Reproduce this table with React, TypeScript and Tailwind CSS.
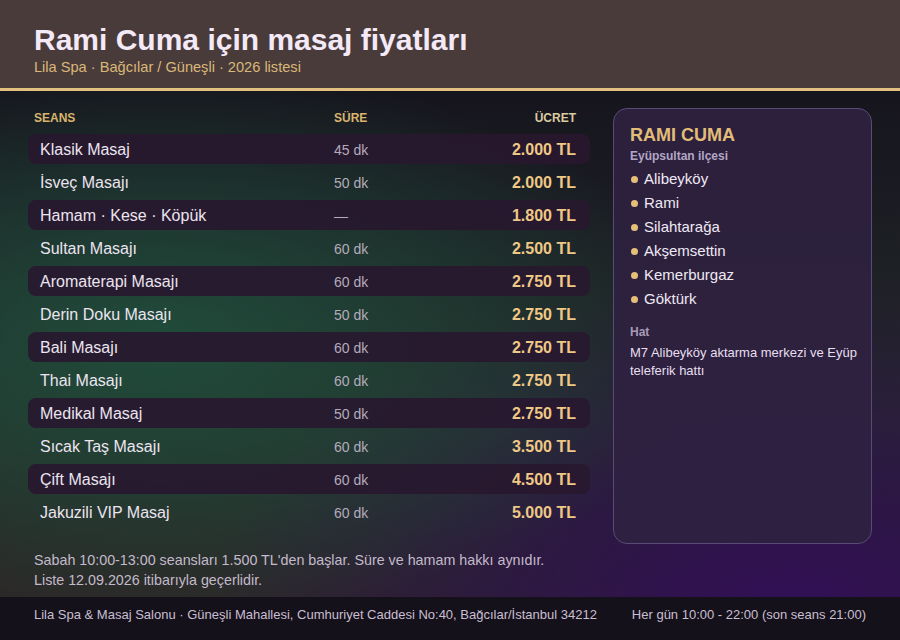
import React from "react";

const rows = [
  { name: "Klasik Masaj", time: "45 dk", price: "2.000 TL" },
  { name: "İsveç Masajı", time: "50 dk", price: "2.000 TL" },
  { name: "Hamam · Kese · Köpük", time: "—", price: "1.800 TL" },
  { name: "Sultan Masajı", time: "60 dk", price: "2.500 TL" },
  { name: "Aromaterapi Masajı", time: "60 dk", price: "2.750 TL" },
  { name: "Derin Doku Masajı", time: "50 dk", price: "2.750 TL" },
  { name: "Bali Masajı", time: "60 dk", price: "2.750 TL" },
  { name: "Thai Masajı", time: "60 dk", price: "2.750 TL" },
  { name: "Medikal Masaj", time: "50 dk", price: "2.750 TL" },
  { name: "Sıcak Taş Masajı", time: "60 dk", price: "3.500 TL" },
  { name: "Çift Masajı", time: "60 dk", price: "4.500 TL" },
  { name: "Jakuzili VIP Masaj", time: "60 dk", price: "5.000 TL" },
];

const areas = ["Alibeyköy", "Rami", "Silahtarağa", "Akşemsettin", "Kemerburgaz", "Göktürk"];

export default function App() {
  return (
    <div className="w-[900px] h-[640px] flex flex-col font-['Liberation_Sans',Arial,sans-serif] bg-[#181520] overflow-hidden">
      <header className="h-[91px] shrink-0 bg-[#4a3b3b] border-b-[3px] border-[#e2c07f] px-[34px] pt-[23px]">
        <h1 className="text-[30px] leading-[34px] font-bold text-[#f3e9f7]">Rami Cuma için masaj fiyatları</h1>
        <p className="text-[14.6px] leading-[20px] text-[#d9b878]">Lila Spa · Bağcılar / Güneşli · 2026 listesi</p>
      </header>

      <main className="flex-1 flex flex-col bg-[radial-gradient(ellipse_60%_55%_at_18%_50%,rgba(32,78,60,0.95)_0%,rgba(32,78,60,0.5)_50%,transparent_100%),radial-gradient(ellipse_65%_70%_at_88%_105%,rgba(50,14,88,1)_0%,rgba(46,16,80,0.65)_45%,transparent_100%),linear-gradient(to_bottom,#16151d_0%,#1b1d23_25%,#252a28_65%,#2c2727_100%)] pt-[17px]">
        <div className="flex pl-[28px] pr-[28px] gap-[23px]">
          <div className="w-[562px] flex flex-col">
            <div className="flex items-center h-[20px] px-[6px] mb-[6px] text-[12px] font-bold">
              <span className="w-[300px] text-[#d9b46e]">SEANS</span>
              <span className="flex-1 text-[#d9b46e]">SÜRE</span>
              <span className="pr-[8px] text-[#dccaa0]">ÜCRET</span>
            </div>
            <div className="flex flex-col gap-[3px]">
              {rows.map((r, i) => (
                <div
                  key={r.name}
                  className={
                    "flex items-center h-[30px] pl-[12px] pr-[14px] pt-[2px] rounded-[8px] " +
                    (i % 2 === 0 ? "bg-[#28172f]/90" : "")
                  }
                >
                  <span className="w-[294px] text-[16px] text-[#ece4f0]">{r.name}</span>
                  <span className="flex-1 text-[14px] text-[#b3abbc]">{r.time}</span>
                  <span className="text-[16px] font-bold text-[#f0c886]">{r.price}</span>
                </div>
              ))}
            </div>
          </div>

          <aside className="w-[259px] h-[436px] rounded-[14px] border border-[#5b4a76] bg-[#2f2140]/90 pl-[16px] pr-[6px] pt-[14px]">
            <h2 className="text-[18px] leading-[24px] font-bold text-[#e2bd78]">RAMI CUMA</h2>
            <p className="text-[12px] leading-[18px] font-bold text-[#b3a6c4]">Eyüpsultan ilçesi</p>
            <ul className="mt-[2px] flex flex-col">
              {areas.map((a) => (
                <li key={a} className="flex items-center h-[24px] text-[15px] text-[#f0e9f4]">
                  <span className="w-[7px] h-[7px] rounded-full bg-[#e6bf78] ml-[1px] mr-[6px]"></span>
                  {a}
                </li>
              ))}
            </ul>
            <p className="mt-[12px] text-[12px] leading-[18px] font-bold text-[#a89bb8]">Hat</p>
            <p className="mt-[3px] text-[13px] leading-[18px] text-[#e8dff0]">
              M7 Alibeyköy aktarma merkezi ve Eyüp teleferik hattı
            </p>
          </aside>
        </div>

        <div className="px-[34px] mt-[6px] text-[14.3px] leading-[20px] text-[#c4bacb]">
          <p>Sabah 10:00-13:00 seansları 1.500 TL'den başlar. Süre ve hamam hakkı aynıdır.</p>
          <p>Liste 12.09.2026 itibarıyla geçerlidir.</p>
        </div>
      </main>

      <footer className="h-[43px] shrink-0 bg-[#15111a] px-[34px] flex items-start pt-[9px] justify-between text-[13px] leading-[18px] text-[#c9bfd2]">
        <span>Lila Spa &amp; Masaj Salonu · Güneşli Mahallesi, Cumhuriyet Caddesi No:40, Bağcılar/İstanbul 34212</span>
        <span>Her gün 10:00 - 22:00 (son seans 21:00)</span>
      </footer>
    </div>
  );
}
